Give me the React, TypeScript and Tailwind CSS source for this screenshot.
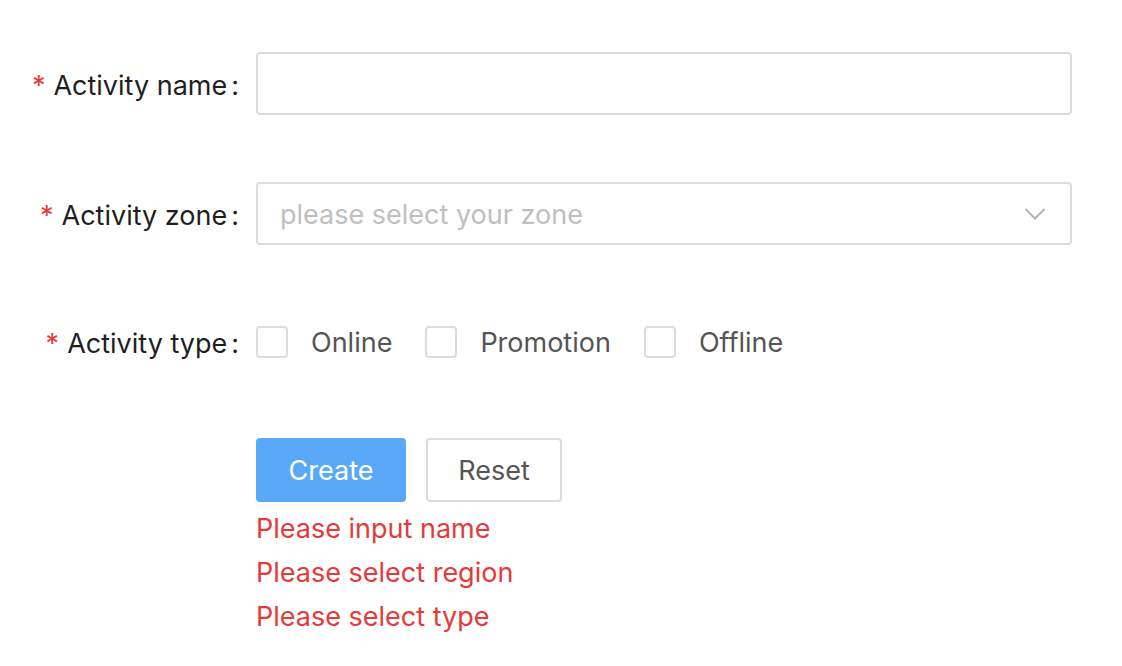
import { useState } from "react";

const font = { fontFamily: 'Inter, "Noto Sans", "Noto Sans CJK SC", sans-serif' };

function Label({ text }: { text: string }) {
    return (
        <div className="w-[256px] shrink-0 text-right text-[27px] text-[#1f1f1f] pr-[17px] pt-[6px] whitespace-nowrap">
            <span className="text-[#e5393a] mr-[8px]">*</span>
            {text}
            <span className="ml-[4px]">:</span>
        </div>
    );
}

function Check({ label, checked, onToggle }: { label: string; checked: boolean; onToggle: () => void }) {
    return (
        <label className="flex items-center cursor-pointer mr-[33px]" onClick={onToggle}>
            <span className={`w-[32px] h-[32px] rounded-[4px] border-2 ${checked ? "bg-[#5aa9f8] border-[#5aa9f8]" : "bg-white border-[#dcdcdc]"}`} />
            <span className="ml-[23px] pt-[4px] text-[27px] text-[#555]">{label}</span>
        </label>
    );
}

export default function App() {
    const [types, setTypes] = useState<string[]>([]);
    const toggle = (t: string) =>
        setTypes(prev => (prev.includes(t) ? prev.filter(x => x !== t) : [...prev, t]));

    return (
        <div className="w-[1122px] h-[666px] bg-white pt-[52px]" style={font}>
            <div className="flex items-center h-[63px]">
                <Label text="Activity name" />
                <input
                    className="w-[816px] h-[63px] border-2 border-[#dcdcdc] rounded-[4px] px-[22px] text-[27px] outline-none"
                />
            </div>

            <div className="flex items-center h-[63px] mt-[67px]">
                <Label text="Activity zone" />
                <div className="w-[816px] h-[63px] border-2 border-[#dcdcdc] rounded-[4px] pl-[22px] pr-[24px] flex items-center justify-between">
                    <span className="pt-[4px] text-[27px] text-[#bfbfbf]">please select your zone</span>
                    <svg width="22" height="14" viewBox="0 0 22 14" fill="none">
                        <path d="M1.5 2 L11 11.5 L20.5 2" stroke="#b4b4b4" strokeWidth="2" />
                    </svg>
                </div>
            </div>

            <div className="flex items-center h-[63px] mt-[65px]">
                <Label text="Activity type" />
                <div className="flex items-center">
                    {["Online", "Promotion", "Offline"].map(t => (
                        <Check key={t} label={t} checked={types.includes(t)} onToggle={() => toggle(t)} />
                    ))}
                </div>
            </div>

            <div className="pl-[256px] mt-[65px]">
                <div className="flex gap-[20px]">
                    <button className="w-[150px] h-[64px] pt-[2px] rounded-[4px] bg-[#5aa9f8] text-white text-[27px]">
                        Create
                    </button>
                    <button className="w-[136px] h-[64px] pt-[2px] rounded-[4px] border-2 border-[#dcdcdc] bg-white text-[#555] text-[27px]">
                        Reset
                    </button>
                </div>
                <div className="text-[#e5393a] text-[27px] leading-[44px] mt-[5px]">
                    <div>Please input name</div>
                    <div>Please select region</div>
                    <div>Please select type</div>
                </div>
            </div>
        </div>
    );
}
